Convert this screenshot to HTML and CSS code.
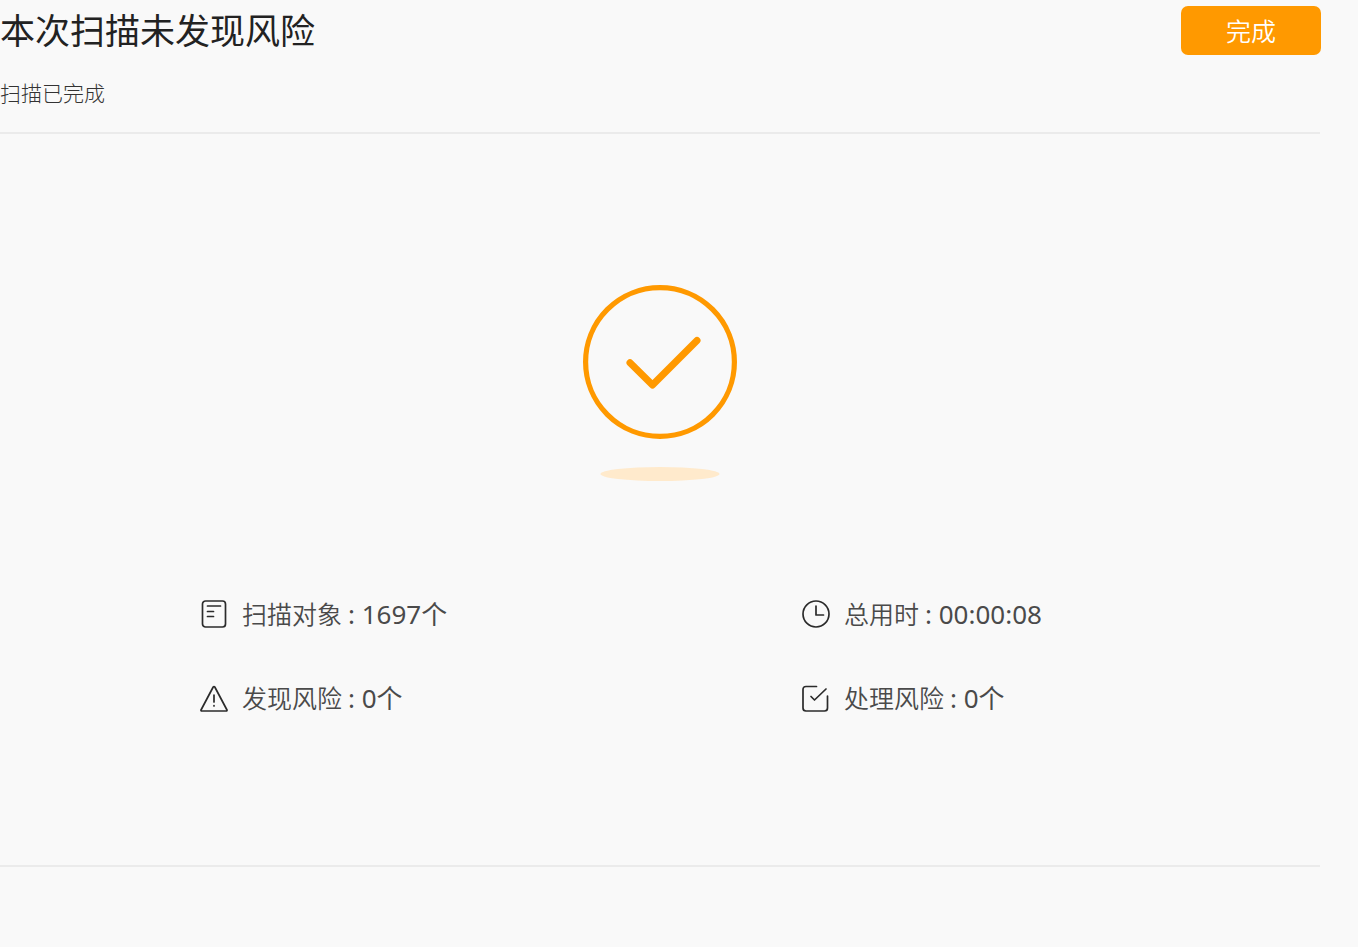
FILE: index.html
```html
<!DOCTYPE html>
<html lang="zh-CN">
<head>
  <meta charset="UTF-8">
  <meta name="viewport" content="width=device-width, initial-scale=1">
  <title>扫描已完成</title>
  <link rel="stylesheet" href="styles.css">
</head>
<body>
  <main class="page">
    <header class="header">
      <div class="header-text">
        <h1 class="title">本次扫描未发现风险</h1>
        <p class="subtitle">扫描已完成</p>
      </div>
      <button type="button" class="done-button">完成</button>
    </header>
    <section class="result">
      <svg class="result-icon" width="156" height="200" viewBox="0 0 156 200" fill="none" aria-hidden="true">
        <circle cx="78" cy="78" r="74.400" stroke="#ff9900" stroke-width="5.200"/>
        <path d="M48 78.700L70.500 101L115 56.500" stroke="#ff9900" stroke-width="7" stroke-linecap="round" stroke-linejoin="round"/>
        <ellipse cx="78" cy="190" rx="59.500" ry="7" fill="#ffeacc"/>
      </svg>
      <ul class="stats">
        <li class="stat">
          <svg class="stat-icon" viewBox="0 0 28 28" aria-hidden="true">
            <rect x="2.500" y="1" width="23" height="26" rx="3"/>
            <path d="M7.500 6H20.500M7.500 11.500H13.500M7.500 16.500H13.500"/>
          </svg>
          <span class="stat-label">扫描对象</span>
          <span class="stat-value">: 1697个</span>
        </li>
        <li class="stat">
          <svg class="stat-icon" viewBox="0 0 28 28" aria-hidden="true">
            <circle cx="14" cy="14" r="13"/>
            <path d="M14 6V15H21.500"/>
          </svg>
          <span class="stat-label">总用时</span>
          <span class="stat-value">: 00:00:08</span>
        </li>
        <li class="stat">
          <svg class="stat-icon" viewBox="0 0 28 28" aria-hidden="true">
            <path d="M13.200 3Q14 2 14.800 3L27 26Q27.200 27 26.200 27H1.800Q.8 27 1 26Z"/>
            <path d="M14 11V18M14 21.500V22"/>
          </svg>
          <span class="stat-label">发现风险</span>
          <span class="stat-value">: 0个</span>
        </li>
        <li class="stat">
          <svg class="stat-icon" viewBox="0 0 28 28" aria-hidden="true">
            <path d="M14.500 2.500H4Q1 2.500 1 5.500V24Q1 27 4 27H22.500Q25.500 27 25.500 24V12"/>
            <path d="M9 12.500L12.500 16L24 5"/>
          </svg>
          <span class="stat-label">处理风险</span>
          <span class="stat-value">: 0个</span>
        </li>
      </ul>
    </section>
  </main>
</body>
</html>
```
FILE: styles.css
```css
* { box-sizing: border-box; }
body { margin: 0; background: #f9f9f9; color: #4a4a4a; font-family: "Noto Sans", "Noto Sans CJK SC", sans-serif; }
.page { padding-right: 38px; }

.header { display: flex; justify-content: space-between; align-items: flex-start; padding: 6px 0 24px; border-bottom: 2px solid #ebebeb; }
.title { margin: 0; font-size: 35px; line-height: 50px; font-weight: 400; color: #222; }
.subtitle { margin: 22px 0 0; font-size: 21px; line-height: 30px; font-weight: 300; color: #333; }
.done-button { width: 140px; height: 49px; margin-right: -1px; padding: 0; border: none; border-radius: 7px; background: #ff9900; color: #fff; font-family: inherit; font-size: 25px; font-weight: 350; line-height: 48px; cursor: pointer; }
.done-button:hover { background: #f08f00; }

.result { display: flex; flex-direction: column; align-items: center; padding: 150px 0 149px; border-bottom: 2px solid #ebebeb; }
.result-icon { display: block; }
.stats { display: grid; grid-template-columns: 1fr 318px; row-gap: 48px; width: 100%; margin: 112px 0 0; padding: 0 200px; list-style: none; }
.stat { display: flex; align-items: center; height: 36px; line-height: 36px; white-space: nowrap; }
.stat-icon { width: 28px; height: 28px; margin-right: 14px; fill: none; stroke: #2b2b2b; stroke-width: 1.7; stroke-linecap: round; stroke-linejoin: round; }
.stat-label { margin-right: 6px; font-size: 25px; font-weight: 350; }
.stat-value { font-size: 26px; }
```
